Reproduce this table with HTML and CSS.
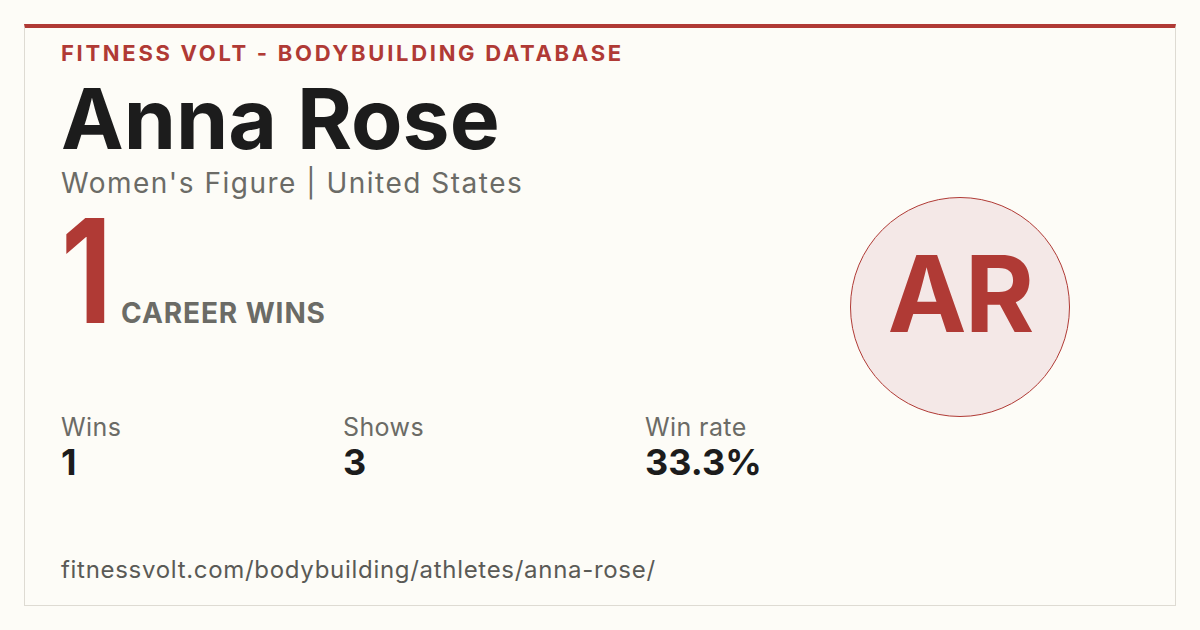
FILE: index.html
```html
<!DOCTYPE html>
<html lang="en">
<head>
<meta charset="utf-8">
<title>Anna Rose - Fitness Volt</title>
<link rel="stylesheet" href="styles.css">
</head>
<body>
<main class="card">
  <section class="info">
    <div class="brand">FITNESS VOLT - BODYBUILDING DATABASE</div>
    <h1 class="name">Anna Rose</h1>
    <div class="sub">Women's Figure | United States</div>
    <div class="wins-row">
      <span class="big">1</span>
      <span class="big-label">CAREER WINS</span>
    </div>
    <div class="stats">
      <div class="stat">
        <div class="stat-label">Wins</div>
        <div class="stat-value">1</div>
      </div>
      <div class="stat">
        <div class="stat-label">Shows</div>
        <div class="stat-value">3</div>
      </div>
      <div class="stat">
        <div class="stat-label">Win rate</div>
        <div class="stat-value">33.3%</div>
      </div>
    </div>
    <div class="url">fitnessvolt.com/bodybuilding/athletes/anna-rose/</div>
  </section>
  <div class="avatar"><span>AR</span></div>
</main>
</body>
</html>
```

FILE: styles.css
```css
html, body {
  margin: 0;
  padding: 0;
}
body {
  background: #fdfcf7;
  font-family: Inter, "Noto Sans", "Liberation Sans", sans-serif;
  width: 1200px;
  height: 630px;
  overflow: hidden;
}
.card {
  box-sizing: border-box;
  margin: 24px;
  height: 582px;
  border: 1px solid #dedbd3;
  border-top: 4px solid #b03a35;
  padding: 14px 105px 23px 36px;
  display: flex;
}
.info {
  flex: 1;
  display: flex;
  flex-direction: column;
}
.brand {
  font-size: 22px;
  line-height: 1;
  font-weight: 700;
  letter-spacing: 2.7px;
  color: #b03a35;
}
.name {
  margin: 13px 0 0;
  font-size: 84px;
  line-height: 1;
  font-weight: 700;
  letter-spacing: 0;
  color: #1c1c1c;
}
.sub {
  margin-top: 8px;
  font-size: 28px;
  line-height: 1;
  letter-spacing: 1.5px;
  color: #6b6b66;
}
.wins-row {
  margin-top: 2px;
  display: flex;
  align-items: baseline;
  gap: 4px;
}
.big {
  font-size: 144px;
  line-height: 1;
  font-weight: 700;
  color: #b03a35;
  letter-spacing: -6px;
  transform: scaleX(0.82);
  transform-origin: left bottom;
}
.big-label {
  font-size: 28px;
  line-height: 1;
  font-weight: 700;
  letter-spacing: 0.9px;
  color: #6b6b66;
}
.stats {
  margin-top: 72px;
  display: grid;
  grid-template-columns: 282px 302px auto;
}
.stat-label {
  font-size: 25px;
  line-height: 1;
  letter-spacing: 0.4px;
  color: #6b6b66;
}
.stat-value {
  margin-top: 4px;
  font-size: 36px;
  line-height: 1;
  font-weight: 700;
  color: #1c1c1c;
}
.url {
  margin-top: auto;
  font-size: 24px;
  line-height: 1;
  letter-spacing: 0.7px;
  color: #5a5a56;
}
.avatar {
  margin-top: 155px;
  width: 220px;
  height: 220px;
  box-sizing: border-box;
  border-radius: 50%;
  border: 1.5px solid #b03a35;
  background: #f4e8e7;
  display: flex;
  align-items: center;
  justify-content: center;
}
.avatar span {
  margin-bottom: 26px;
  font-size: 106px;
  line-height: 1;
  font-weight: 700;
  color: #b03a35;
  letter-spacing: -2px;
}
```
